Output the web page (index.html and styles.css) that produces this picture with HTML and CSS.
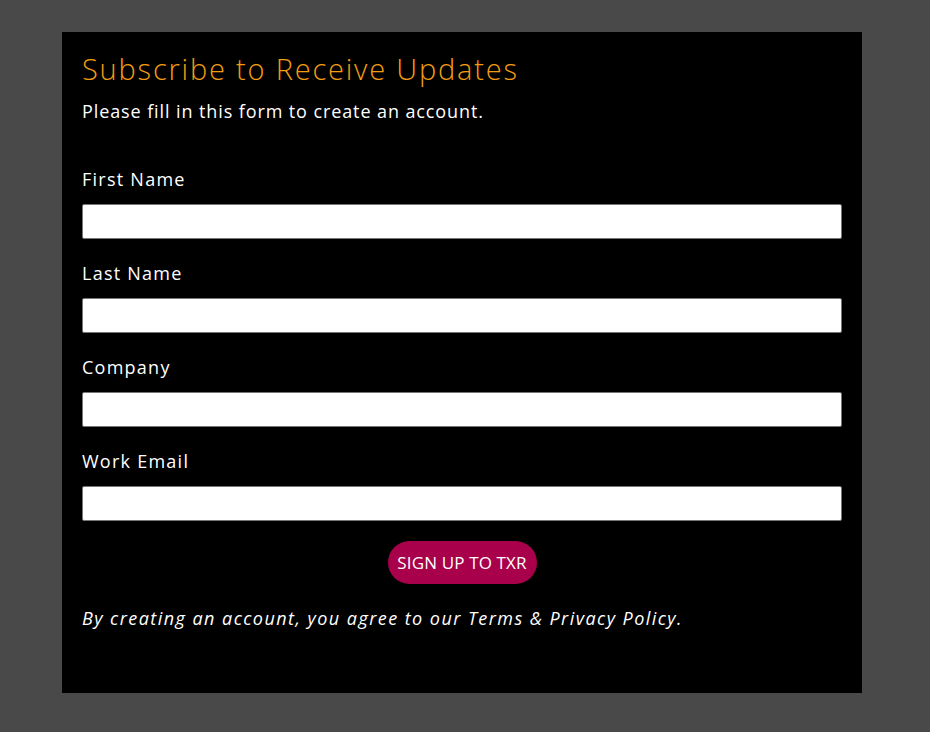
FILE: index.html
```html
<!DOCTYPE html>
<html lang="en">
<head>
<meta charset="utf-8">
<title>Subscribe</title>
<link rel="stylesheet" href="styles.css">
</head>
<body>
<div class="page">
  <section class="panel">
    <h2 class="title">Subscribe to Receive Updates</h2>
    <p class="intro">Please fill in this form to create an account.</p>
    <form class="form">
      <div class="field">
        <label class="label" for="fn">First Name</label>
        <input class="input" id="fn" type="text">
      </div>
      <div class="field">
        <label class="label" for="ln">Last Name</label>
        <input class="input" id="ln" type="text">
      </div>
      <div class="field">
        <label class="label" for="co">Company</label>
        <input class="input" id="co" type="text">
      </div>
      <div class="field">
        <label class="label" for="em">Work Email</label>
        <input class="input" id="em" type="email">
      </div>
      <div class="actions">
        <button class="btn" type="button">SIGN UP TO TXR</button>
      </div>
    </form>
    <p class="terms">By creating an account, you agree to our Terms &amp; Privacy Policy.</p>
  </section>
</div>
</body>
</html>
```
FILE: styles.css
```css
* { box-sizing: border-box; }
html, body { margin: 0; padding: 0; }
body {
  background: #494949;
  font-family: "Open Sans", "Liberation Sans", sans-serif;
  color: #fff;
}
.page {
  padding: 32px 68px 39px 62px;
}
.panel {
  width: 800px;
  background: #000;
  padding: 20px 20px 61px 20px;
  display: flex;
  flex-direction: column;
}
.title {
  margin: 0;
  font-size: 29px;
  line-height: 34px;
  font-weight: 300;
  color: #f39c12;
  letter-spacing: 1.8px;
}
.intro {
  margin: 12px 0 0;
  font-size: 18px;
  line-height: 27px;
  font-weight: 400;
  letter-spacing: 0.9px;
}
.form {
  margin-top: 40px;
  display: flex;
  flex-direction: column;
  gap: 20px;
}
.field {
  display: flex;
  flex-direction: column;
  gap: 11px;
}
.label {
  font-size: 18px;
  line-height: 28px;
  letter-spacing: 1.25px;
}
.input {
  display: block;
  width: 760px;
  height: 35px;
  margin: 0;
  background: #fff;
  border: 1px solid #767676;
  border-radius: 2px;
  padding: 0 8px;
  font: inherit;
}
.actions {
  display: flex;
  justify-content: center;
  margin-top: 0;
}
.btn {
  height: 43px;
  width: 149px;
  border: 0;
  border-radius: 22px;
  background: #a8004a;
  color: #fff;
  font-family: "Open Sans", "Liberation Sans", sans-serif;
  font-size: 17px;
  letter-spacing: 0.15px;
  padding: 0;
  cursor: pointer;
}
.terms {
  margin: 21px 0 0;
  font-size: 18px;
  line-height: 27px;
  font-style: italic;
  letter-spacing: 1.45px;
}
```
